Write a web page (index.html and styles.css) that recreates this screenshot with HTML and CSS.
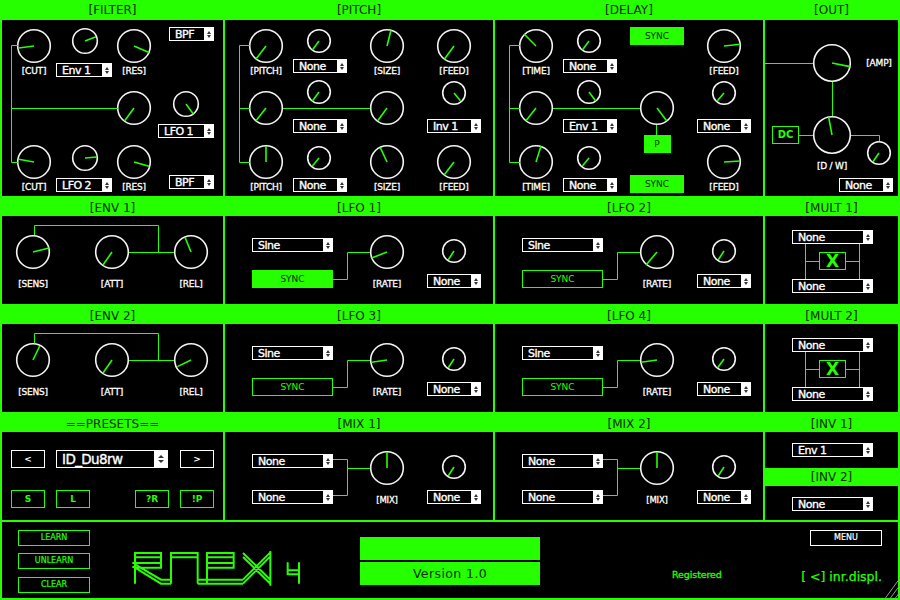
FILE: index.html
```html
<!DOCTYPE html>
<html lang="en">
<head>
<meta charset="utf-8">
<title>RNEX 4</title>
<link rel="stylesheet" href="styles.css">
</head>
<body>
<main class="app">

<section class="panel">
  <h2 class="hd">[FILTER]</h2>
  <div class="body pad15">
    <svg class="wires" viewBox="2 20 221 176"><path d="M18 45.5H11.5V162.5H18M11.5 108.5H118"/></svg>
    <div class="col w34">
      <svg class="k k34 t9" viewBox="-17 -17 34 34"><circle r="16.3"/><line x2="-15.3" y2="2"/></svg>
      <div class="lb t2">[CUT]</div>
      <svg class="k k34 t68" viewBox="-17 -17 34 34"><circle r="16.3"/><line x2="-15.3" y2="-2.7"/></svg>
      <div class="lb t2">[CUT]</div>
    </div>
    <div class="col w56 l5">
      <svg class="k k26 t8 nudge-r" viewBox="-13 -13 26 26"><circle r="12.3"/><line x2="11" y2="-4.3"/></svg>
      <div class="sel w56 t9"><span>Env 1</span><i></i></div>
      <svg class="k k26 t68 nudge-r" viewBox="-13 -13 26 26"><circle r="12.3"/><line x2="12" y2="-1"/></svg>
      <div class="sel w56 t7"><span>LFO 2</span><i></i></div>
    </div>
    <div class="col w34 l5">
      <svg class="k k34 t9" viewBox="-17 -17 34 34"><circle r="16.3"/><line x2="15" y2="6.6"/></svg>
      <div class="lb t2">[RES]</div>
      <svg class="k k34 t14" viewBox="-17 -17 34 34"><circle r="16.3"/><line x2="-9.3" y2="12.7"/></svg>
      <svg class="k k34 t20" viewBox="-17 -17 34 34"><circle r="16.3"/><line x2="15" y2="4.3"/></svg>
      <div class="lb t2">[RES]</div>
    </div>
    <div class="col w56 l7">
      <div class="sel w45 t7 end"><span>BPF</span><i></i></div>
      <svg class="k k26 t50" viewBox="-13 -13 26 26"><circle r="12.3"/><line x2="7.3" y2="10"/></svg>
      <div class="sel w56 t7"><span>LFO 1</span><i></i></div>
      <div class="sel w45 t37 end"><span>BPF</span><i></i></div>
    </div>
  </div>
</section>

<section class="panel">
  <h2 class="hd">[PITCH]</h2>
  <div class="body pad24">
    <svg class="wires" viewBox="225 20 268 176"><path d="M250 45.5H239.5V162.5H250M239.5 108.5H250M283 108.5H370"/></svg>
    <div class="col w34">
      <svg class="k k34 t9" viewBox="-17 -17 34 34"><circle r="16.3"/><line x2="-10" y2="13"/></svg>
      <div class="lb t2">[PITCH]</div>
      <svg class="k k34 t14" viewBox="-17 -17 34 34"><circle r="16.3"/><line x2="-10" y2="12.7"/></svg>
      <svg class="k k34 t20" viewBox="-17 -17 34 34"><circle r="16.3"/><line x2="0" y2="-16"/></svg>
      <div class="lb t2">[PITCH]</div>
    </div>
    <div class="col w54 l10">
      <svg class="k k24 t9 nudge-l" viewBox="-12 -12 24 24"><circle r="11.3"/><line x2="-6.6" y2="9"/></svg>
      <div class="sel w54 t6"><span>None</span><i></i></div>
      <svg class="k k24 t7 nudge-l" viewBox="-12 -12 24 24"><circle r="11.3"/><line x2="-6.6" y2="9"/></svg>
      <div class="sel w54 t15"><span>None</span><i></i></div>
      <svg class="k k24 t13 nudge-l" viewBox="-12 -12 24 24"><circle r="11.3"/><line x2="-6.6" y2="8"/></svg>
      <div class="sel w54 t8"><span>None</span><i></i></div>
    </div>
    <div class="col w34 l23">
      <svg class="k k34 t9" viewBox="-17 -17 34 34"><circle r="16.3"/><line x2="4" y2="-15.7"/></svg>
      <div class="lb t2">[SIZE]</div>
      <svg class="k k34 t14" viewBox="-17 -17 34 34"><circle r="16.3"/><line x2="-9.3" y2="12.7"/></svg>
      <svg class="k k34 t20" viewBox="-17 -17 34 34"><circle r="16.3"/><line x2="-6.7" y2="-14.3"/></svg>
      <div class="lb t2">[SIZE]</div>
    </div>
    <div class="col w54 l23">
      <svg class="k k34 t9" viewBox="-17 -17 34 34"><circle r="16.3"/><line x2="-9.7" y2="13.3"/></svg>
      <div class="lb t2">[FEED]</div>
      <svg class="k k24 t4" viewBox="-12 -12 24 24"><circle r="11.3"/><line x2="6.4" y2="7.7"/></svg>
      <div class="sel w54 t14"><span>Inv 1</span><i></i></div>
      <svg class="k k34 t12" viewBox="-17 -17 34 34"><circle r="16.3"/><line x2="-9.7" y2="12.7"/></svg>
      <div class="lb t2">[FEED]</div>
    </div>
  </div>
</section>

<section class="panel">
  <h2 class="hd">[DELAY]</h2>
  <div class="body pad24">
    <svg class="wires" viewBox="495 20 268 176"><path d="M520 45.5H509.5V162.5H520M509.5 108.5H520M553 108.5H640M656.5 125V135"/></svg>
    <div class="col w34">
      <svg class="k k34 t9" viewBox="-17 -17 34 34"><circle r="16.3"/><line x2="-11.7" y2="-11.7"/></svg>
      <div class="lb t2">[TIME]</div>
      <svg class="k k34 t14" viewBox="-17 -17 34 34"><circle r="16.3"/><line x2="-10" y2="12.7"/></svg>
      <svg class="k k34 t20" viewBox="-17 -17 34 34"><circle r="16.3"/><line x2="5" y2="-16"/></svg>
      <div class="lb t2">[TIME]</div>
    </div>
    <div class="col w54 l10">
      <svg class="k k24 t9 nudge-l" viewBox="-12 -12 24 24"><circle r="11.3"/><line x2="-6.6" y2="9"/></svg>
      <div class="sel w54 t6"><span>None</span><i></i></div>
      <svg class="k k24 t7 nudge-l" viewBox="-12 -12 24 24"><circle r="11.3"/><line x2="6.7" y2="9"/></svg>
      <div class="sel w54 t15"><span>Env 1</span><i></i></div>
      <svg class="k k24 t13 nudge-l" viewBox="-12 -12 24 24"><circle r="11.3"/><line x2="-6.6" y2="8"/></svg>
      <div class="sel w54 t8"><span>None</span><i></i></div>
    </div>
    <div class="col w54 l13">
      <div class="sync on t7">SYNC</div>
      <svg class="k k34 t46" viewBox="-17 -17 34 34"><circle r="16.3"/><line x2="9.6" y2="12.7"/></svg>
      <div class="sync on wp t10">P</div>
      <div class="sync on t22">SYNC</div>
    </div>
    <div class="col w54 l13">
      <svg class="k k34 t9" viewBox="-17 -17 34 34"><circle r="16.3"/><line x2="16.3" y2="-1.7"/></svg>
      <div class="lb t2">[FEED]</div>
      <svg class="k k24 t4" viewBox="-12 -12 24 24"><circle r="11.3"/><line x2="-6.6" y2="7.7"/></svg>
      <div class="sel w54 t14"><span>None</span><i></i></div>
      <svg class="k k34 t12" viewBox="-17 -17 34 34"><circle r="16.3"/><line x2="16.3" y2="-1"/></svg>
      <div class="lb t2">[FEED]</div>
    </div>
  </div>
</section>

<section class="panel">
  <h2 class="hd">[OUT]</h2>
  <div class="body stack-out">
    <svg class="wires" viewBox="765 20 133 176"><path d="M765 63.5H813M832.5 82V116M799 135.5H813M851 135.5H879.5V141"/></svg>
    <div class="out-amp">
      <svg class="k k38" viewBox="-19 -19 38 38"><circle r="18.3"/><line x2="18" y2="3.6"/></svg>
      <div class="lb amp">[AMP]</div>
    </div>
    <div class="out-dw">
      <div class="btn dc">DC</div>
      <div class="col w38 l14">
        <svg class="k k38" viewBox="-19 -19 38 38"><circle r="18.3"/><line x2="-3.3" y2="-17.7"/></svg>
        <div class="lb t6">[D / W]</div>
      </div>
      <svg class="k k24 l16 t25" viewBox="-12 -12 24 24"><circle r="11.3"/><line x2="-6" y2="8.7"/></svg>
    </div>
    <div class="sel w54 t6 out-sel"><span>None</span><i></i></div>
  </div>
</section>

<section class="panel">
  <h2 class="hd">[ENV 1]</h2>
  <div class="body env">
    <svg class="wires" viewBox="2 216 221 88"><path d="M34.5 235V225.5H158.5V252.5M129 252.5H174"/></svg>
    <div class="col w34"><svg class="k k34" viewBox="-17 -17 34 34"><circle r="16.3"/><line x2="16" y2="-4"/></svg><div class="lb t9">[SENS]</div></div>
    <div class="col w34"><svg class="k k34" viewBox="-17 -17 34 34"><circle r="16.3"/><line x2="-9" y2="13"/></svg><div class="lb t9">[ATT]</div></div>
    <div class="col w34"><svg class="k k34" viewBox="-17 -17 34 34"><circle r="16.3"/><line x2="-6" y2="-14.7"/></svg><div class="lb t9">[REL]</div></div>
  </div>
</section>

<section class="panel">
  <h2 class="hd">[LFO 1]</h2>
  <div class="body pad27">
    <svg class="wires" viewBox="225 216 268 88"><path d="M333 279.5H347.5V252.5H370"/></svg>
    <div class="col w81"><div class="sel w81 t22"><span>Sine</span><i></i></div><div class="sync wide on t18">SYNC</div></div>
    <div class="col w34 l37"><svg class="k k34 t19" viewBox="-17 -17 34 34"><circle r="16.3"/><line x2="-15.3" y2="6"/></svg><div class="lb t9">[RATE]</div></div>
    <div class="col w54 l23"><svg class="k k24 t23" viewBox="-12 -12 24 24"><circle r="11.3"/><line x2="-5.7" y2="8.7"/></svg><div class="sel w54 t11"><span>None</span><i></i></div></div>
  </div>
</section>

<section class="panel">
  <h2 class="hd">[LFO 2]</h2>
  <div class="body pad27">
    <svg class="wires" viewBox="495 216 268 88"><path d="M603 279.5H617.5V252.5H640"/></svg>
    <div class="col w81"><div class="sel w81 t22"><span>Sine</span><i></i></div><div class="sync wide t18">SYNC</div></div>
    <div class="col w34 l37"><svg class="k k34 t19" viewBox="-17 -17 34 34"><circle r="16.3"/><line x2="-11" y2="13"/></svg><div class="lb t9">[RATE]</div></div>
    <div class="col w54 l23"><svg class="k k24 t23" viewBox="-12 -12 24 24"><circle r="11.3"/><line x2="-5.7" y2="8.7"/></svg><div class="sel w54 t11"><span>None</span><i></i></div></div>
  </div>
</section>

<section class="panel">
  <h2 class="hd">[MULT 1]</h2>
  <div class="body pad27">
    <svg class="wires" viewBox="765 216 133 88"><path d="M805.5 244V279M859.5 244V279M805.5 261.5H819M846 261.5H859.5"/></svg>
    <div class="col w81"><div class="sel w81 t14"><span>None</span><i></i></div><div class="btn x t8">X</div><div class="sel w81 t9"><span>None</span><i></i></div></div>
  </div>
</section>

<section class="panel">
  <h2 class="hd">[ENV 2]</h2>
  <div class="body env">
    <svg class="wires" viewBox="2 324 221 88"><path d="M34.5 343V333.5H158.5V360.5M129 360.5H174"/></svg>
    <div class="col w34"><svg class="k k34" viewBox="-17 -17 34 34"><circle r="16.3"/><line x2="6.7" y2="-14"/></svg><div class="lb t9">[SENS]</div></div>
    <div class="col w34"><svg class="k k34" viewBox="-17 -17 34 34"><circle r="16.3"/><line x2="-9" y2="13"/></svg><div class="lb t9">[ATT]</div></div>
    <div class="col w34"><svg class="k k34" viewBox="-17 -17 34 34"><circle r="16.3"/><line x2="-13.6" y2="6.6"/></svg><div class="lb t9">[REL]</div></div>
  </div>
</section>

<section class="panel">
  <h2 class="hd">[LFO 3]</h2>
  <div class="body pad27">
    <svg class="wires" viewBox="225 324 268 88"><path d="M333 387.5H347.5V360.5H370"/></svg>
    <div class="col w81"><div class="sel w81 t22"><span>Sine</span><i></i></div><div class="sync wide t18">SYNC</div></div>
    <div class="col w34 l37"><svg class="k k34 t19" viewBox="-17 -17 34 34"><circle r="16.3"/><line x2="-15.3" y2="2.3"/></svg><div class="lb t9">[RATE]</div></div>
    <div class="col w54 l23"><svg class="k k24 t23" viewBox="-12 -12 24 24"><circle r="11.3"/><line x2="-5.7" y2="8.7"/></svg><div class="sel w54 t11"><span>None</span><i></i></div></div>
  </div>
</section>

<section class="panel">
  <h2 class="hd">[LFO 4]</h2>
  <div class="body pad27">
    <svg class="wires" viewBox="495 324 268 88"><path d="M603 387.5H617.5V360.5H640"/></svg>
    <div class="col w81"><div class="sel w81 t22"><span>Sine</span><i></i></div><div class="sync wide t18">SYNC</div></div>
    <div class="col w34 l37"><svg class="k k34 t19" viewBox="-17 -17 34 34"><circle r="16.3"/><line x2="-16" y2="2.3"/></svg><div class="lb t9">[RATE]</div></div>
    <div class="col w54 l23"><svg class="k k24 t23" viewBox="-12 -12 24 24"><circle r="11.3"/><line x2="-6.3" y2="8.7"/></svg><div class="sel w54 t11"><span>None</span><i></i></div></div>
  </div>
</section>

<section class="panel">
  <h2 class="hd">[MULT 2]</h2>
  <div class="body pad27">
    <svg class="wires" viewBox="765 324 133 88"><path d="M805.5 352V387M859.5 352V387M805.5 369.5H819M846 369.5H859.5"/></svg>
    <div class="col w81"><div class="sel w81 t14"><span>None</span><i></i></div><div class="btn x t8">X</div><div class="sel w81 t9"><span>None</span><i></i></div></div>
  </div>
</section>

<section class="panel">
  <h2 class="hd">==PRESETS==</h2>
  <div class="body presets">
    <div class="row t18">
      <div class="btn wh w34">&lt;</div>
      <div class="sel big l11"><span>ID_Du8rw</span><i></i></div>
      <div class="btn wh w34 l12">&gt;</div>
    </div>
    <div class="row t22">
      <div class="btn w34">S</div>
      <div class="btn w34 l11">L</div>
      <div class="btn w34 l45">?R</div>
      <div class="btn w34 l11">!P</div>
    </div>
  </div>
</section>

<section class="panel">
  <h2 class="hd">[MIX 1]</h2>
  <div class="body pad27">
    <svg class="wires" viewBox="225 432 268 88"><path d="M333 459.5H347.5V495.5H333M347.5 468.5H370"/></svg>
    <div class="col w81"><div class="sel w81 t22"><span>None</span><i></i></div><div class="sel w81 t22"><span>None</span><i></i></div></div>
    <div class="col w34 l37"><svg class="k k34 t19" viewBox="-17 -17 34 34"><circle r="16.3"/><line x2="0" y2="-16"/></svg><div class="lb sm t9">[MIX]</div></div>
    <div class="col w54 l23"><svg class="k k24 t23" viewBox="-12 -12 24 24"><circle r="11.3"/><line x2="-5.7" y2="8.7"/></svg><div class="sel w54 t11"><span>None</span><i></i></div></div>
  </div>
</section>

<section class="panel">
  <h2 class="hd">[MIX 2]</h2>
  <div class="body pad27">
    <svg class="wires" viewBox="495 432 268 88"><path d="M603 459.5H617.5V495.5H603M617.5 468.5H640"/></svg>
    <div class="col w81"><div class="sel w81 t22"><span>None</span><i></i></div><div class="sel w81 t22"><span>None</span><i></i></div></div>
    <div class="col w34 l37"><svg class="k k34 t19" viewBox="-17 -17 34 34"><circle r="16.3"/><line x2="0" y2="-16"/></svg><div class="lb sm t9">[MIX]</div></div>
    <div class="col w54 l23"><svg class="k k24 t23" viewBox="-12 -12 24 24"><circle r="11.3"/><line x2="-5.7" y2="8.7"/></svg><div class="sel w54 t11"><span>None</span><i></i></div></div>
  </div>
</section>

<section class="panel">
  <h2 class="hd">[INV 1]</h2>
  <div class="body inv1 pad27"><div class="sel w81 t11"><span>Env 1</span><i></i></div></div>
  <h2 class="hd hd18">[INV 2]</h2>
  <div class="body inv2 pad27"><div class="sel w81 t11"><span>None</span><i></i></div></div>
</section>

<footer class="foot">
  <div class="col w72">
    <div class="btn tiny t8">LEARN</div>
    <div class="btn tiny t7">UNLEARN</div>
    <div class="btn tiny t8">CLEAR</div>
  </div>
  <svg class="logo" viewBox="0 0 555 135"><path d="M30 116V22M27 24H108M30 37H108M30 54H108M30 68H108M108 21V71M22 54H30M22 66H30M30 58L108 104H138M30 68L108 116H138M138 116V21M135 24H218M138 37H218M218 21V116M218 104H354M218 116H354M246 22V116M243 24H326M246 37H326M246 54H326M246 68H326M326 21V71M354 104L436 22M354 116L436 34M354 24L436 104M354 36L436 116M436 18V122M488 52V91M522 52V116M488 76H522M488 88H522"/></svg>
  <div class="blocks">
    <div class="block"></div>
    <div class="block ver">Version 1.0</div>
  </div>
  <div class="reg">Registered</div>
  <div class="foot-right">
    <div class="btn tiny wh menu">MENU</div>
    <div class="brand">[ &lt;] inr.displ.</div>
  </div>
</footer>

<svg class="grip" viewBox="0 0 17 23"><path d="M1 23L17 1M6 23L17 8M11 23L17 15"/></svg>
</main>
</body>
</html>
```

FILE: styles.css
```css
* { box-sizing: border-box; }
html, body { margin: 0; padding: 0; background: #000; }
.app {
  position: relative;
  width: 900px; height: 600px;
  background: #26ff00;
  padding: 0 2px 2px;
  display: grid;
  grid-template-columns: 221px 268px 268px 133px;
  grid-template-rows: 196px 108px 108px 108px 78px;
  column-gap: 2px;
  font-family: "DejaVu Sans", sans-serif;
  overflow: hidden;
}
.panel { display: flex; flex-direction: column; min-height: 0; }
.hd {
  flex: 0 0 20px; height: 20px; margin: 0;
  font-size: 12px; font-weight: 400; line-height: 20px; text-align: center;
  color: #062c00;
}
.panel:nth-child(n+5) > .hd:first-child { line-height: 24px; }
.hd18 { flex-basis: 18px; height: 18px; line-height: 19px; }
.body { position: relative; flex: 1 1 auto; background: #000; display: flex; min-height: 0; }
.wires { position: absolute; inset: 0; width: 100%; height: 100%; fill: none; stroke: #26ff00; stroke-width: 1; pointer-events: none; }
.col { display: flex; flex-direction: column; align-items: center; flex: none; }
.row { display: flex; }

.pad15 { padding-left: 15px; }
.pad24 { padding-left: 24px; }
.pad27 { padding-left: 27px; }
.env { padding: 19px 0 0 14px; gap: 45px; }
.presets { flex-direction: column; padding-left: 9px; }
.inv1 { flex: 0 0 36px; }
.inv2 { flex: 0 0 34px; }

.w34 { width: 34px; }
.w38 { width: 38px; }
.w54 { width: 54px; }
.w56 { width: 56px; }
.w72 { width: 72px; }
.w81 { width: 81px; }
.w45 { width: 45px; }

.t2 { margin-top: 2px; } .t4 { margin-top: 4px; } .t6 { margin-top: 6px; } .t7 { margin-top: 7px; }
.t8 { margin-top: 8px; } .t9 { margin-top: 9px; } .t10 { margin-top: 10px; } .t11 { margin-top: 11px; }
.t12 { margin-top: 12px; } .t13 { margin-top: 13px; } .t14 { margin-top: 14px; } .t15 { margin-top: 15px; }
.t18 { margin-top: 18px; } .t19 { margin-top: 19px; } .t20 { margin-top: 20px; } .t22 { margin-top: 22px; }
.t23 { margin-top: 23px; } .t25 { margin-top: 25px; } .t37 { margin-top: 37px; } .t46 { margin-top: 46px; }
.t50 { margin-top: 50px; } .t68 { margin-top: 68px; }
.l5 { margin-left: 5px; } .l7 { margin-left: 7px; } .l10 { margin-left: 10px; } .l11 { margin-left: 11px; }
.l12 { margin-left: 12px; } .l13 { margin-left: 13px; } .l14 { margin-left: 14px; } .l16 { margin-left: 16px; }
.l23 { margin-left: 23px; } .l37 { margin-left: 37px; } .l45 { margin-left: 45px; }
.end { align-self: flex-end; }
.nudge-r { margin-left: 2px; }
.nudge-l { margin-right: 2px; }

.k { display: block; flex: none; fill: none; overflow: visible; }
.k circle { stroke: #f4f4f4; stroke-width: 1.6; }
.k line { stroke: #26ff00; stroke-width: 1.6; }
.k24 { width: 24px; height: 24px; }
.k26 { width: 26px; height: 26px; }
.k34 { width: 34px; height: 34px; }
.k38 { width: 38px; height: 38px; }

.lb {
  height: 12px; line-height: 12px; white-space: nowrap;
  font-size: 9px; color: #fff; text-align: center; letter-spacing: -0.2px;
  -webkit-text-stroke: 0.3px #fff;
}
.sm { font-size: 8.5px; }
.amp { width: 28px; margin-left: 14px; }

.sel {
  display: flex; flex: none; height: 14px;
  border: 1px solid #fff; background: #000; color: #fff;
  font-size: 11px; line-height: 13px; letter-spacing: -0.5px;
  -webkit-text-stroke: 0.35px #fff;
}
.sel span { flex: 1 1 auto; padding-left: 5px; white-space: nowrap; overflow: hidden; }
.sel i {
  flex: 0 0 9px; background: #fff;
  display: flex; flex-direction: column; align-items: center; justify-content: center; gap: 1px;
}
.sel i::before, .sel i::after { content: ""; display: block; width: 0; height: 0; border-left: 2px solid transparent; border-right: 2px solid transparent; }
.sel i::before { border-bottom: 3px solid #333; }
.sel i::after { border-top: 3px solid #333; }
.big { width: 112px; height: 18px; font-size: 13.5px; line-height: 16px; letter-spacing: -0.6px; }
.big i { flex-basis: 13px; gap: 2px; }
.big i::before, .big i::after { border-left-width: 3px; border-right-width: 3px; }

.sync {
  width: 54px; height: 18px; flex: none;
  border: 1px solid #26ff00; color: #26ff00;
  font-size: 9px; line-height: 16px; text-align: center;
}
.sync.wide { width: 81px; }
.sync.on { background: #26ff00; color: #062c00; }
.sync.wp { width: 27px; }

.btn {
  height: 18px; flex: none;
  border: 1px solid #26ff00; color: #26ff00;
  font-size: 9px; font-weight: 700; line-height: 16px; text-align: center;
}
.wh { border-color: #fff; color: #fff; }
.dc { width: 27px; margin: 10px 0 0 7px; font-size: 10px; }
.x { width: 27px; font-size: 17px; }
.tiny { width: 72px; height: 16px; font-size: 8px; font-weight: 400; line-height: 14px; -webkit-text-stroke: 0.2px currentColor; }

.stack-out { flex-direction: column; }
.out-amp { display: flex; align-items: center; padding: 24px 0 0 48px; }
.out-dw { display: flex; align-items: flex-start; margin-top: 34px; }
.out-sel { margin-left: 74px; }

.foot {
  grid-column: 1 / -1; margin-top: 2px; height: 76px;
  background: #000; display: flex; align-items: flex-start; padding-left: 16px;
}
.logo { flex: none; width: 185px; height: 45px; margin: 23px 0 0 35px; fill: none; stroke: #26ff00; stroke-width: 6; }
.blocks { flex: none; width: 180px; margin: 15px 0 0 50px; display: flex; flex-direction: column; gap: 2px; }
.block { height: 23px; background: #26ff00; }
.ver { color: #062c00; font-size: 12.5px; line-height: 24px; text-align: center; letter-spacing: 0.4px; }
.reg { flex: none; width: 51px; margin: 47px 0 0 132px; height: 12px; color: #26ff00; font-size: 9.5px; line-height: 12px; white-space: nowrap; letter-spacing: -0.1px; -webkit-text-stroke: 0.3px #26ff00; }
.foot-right { flex: none; width: 81px; margin-left: 78px; display: flex; flex-direction: column; align-items: flex-end; }
.menu { margin-top: 8px; }
.brand { margin-top: 23px; height: 16px; color: #26ff00; font-size: 12.5px; line-height: 16px; white-space: nowrap; letter-spacing: 0; -webkit-text-stroke: 0.25px #26ff00; }

.grip { position: absolute; right: 0; bottom: 0; width: 17px; height: 23px; fill: none; stroke: #999; stroke-width: 1; }
```
